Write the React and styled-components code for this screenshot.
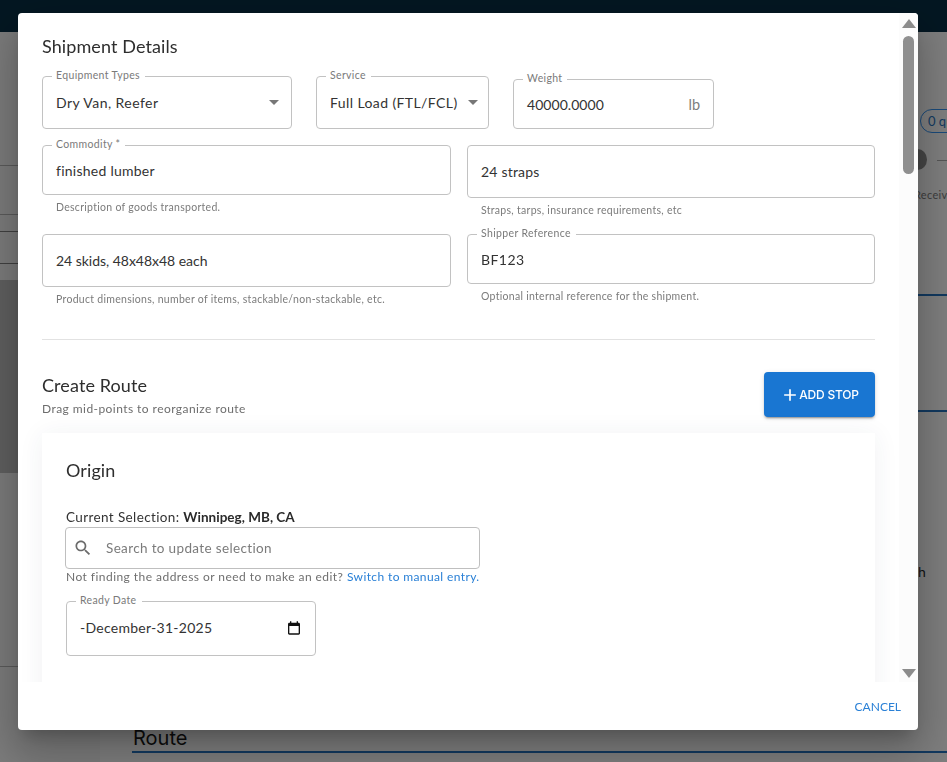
import React from "react";
import styled, { createGlobalStyle } from "styled-components";

const FONT = `"Lato", "Open Sans", "Liberation Sans", sans-serif`;

const Global = createGlobalStyle`
  html, body { margin: 0; padding: 0; height: 100%; overflow: hidden; background: #7c7c7c; }
  * { box-sizing: border-box; }
  body { font-family: ${FONT}; color: #2b2b2b; }
`;

const Page = styled.div`
  width: 947px;
  height: 762px;
  display: flex;
  flex-direction: column;
  overflow: hidden;
  background: #7e7e7e;
`;
const TopBar = styled.div`
  height: 32px;
  flex: none;
  background: #041722;
`;
const Body = styled.div`
  flex: 1;
  display: grid;
  grid-template-columns: 100px 847px;
  min-height: 0;
`;
const Sidebar = styled.div`
  display: flex;
  flex-direction: column;
  background: #7b7b7b;
`;
const SideRow = styled.div`
  height: ${(p) => p.$h}px;
  flex: none;
  background: ${(p) => p.$bg || "transparent"};
  border-bottom: ${(p) => (p.$line ? `1px solid ${p.$line}` : "none")};
`;
const Main = styled.div`
  display: flex;
  flex-direction: column;
  padding-left: 32px;
  overflow: hidden;
`;
const Chip = styled.div`
  margin: 77px 0 0 788px;
  flex: none;
  width: 80px;
  height: 24px;
  border: 1px solid #1a4a7a;
  border-radius: 12px;
  padding-left: 7px;
  font-size: 13px;
  line-height: 22px;
  color: #123a60;
  white-space: nowrap;
`;
const Stepper = styled.div`
  margin: 15px 0 0 776px;
  flex: none;
  display: flex;
  align-items: center;
  gap: 10px;
  height: 22px;
`;
const StepDot = styled.div`
  width: 19px;
  height: 21px;
  border-radius: 50%;
  background: #464646;
  flex: none;
`;
const StepLine = styled.div`
  width: 60px;
  height: 1px;
  background: #565656;
  flex: none;
  margin-top: 3px;
`;
const StepText = styled.div`
  margin: 18px 0 0 782px;
  font-size: 11px;
  line-height: 14px;
  letter-spacing: 0.3px;
  color: #3d3d3d;
  white-space: nowrap;
  flex: none;
`;
const BlueRule = styled.div`
  flex: none;
  height: 2px;
  margin-top: ${(p) => p.$mt}px;
  background: #12395f;
  width: 815px;
`;
const StrayText = styled.div`
  flex: none;
  margin: 151px 0 0 786px;
  font-size: 14px;
  line-height: 18px;
  color: #111;
`;
const RouteHeading = styled.div`
  flex: none;
  margin: 145px 0 0 1px;
  font-family: "Inter", sans-serif;
  font-size: 20px;
  line-height: 25px;
  color: #0c0c0c;
`;

const Modal = styled.div`
  position: fixed;
  left: 18px;
  top: 13px;
  width: 900px;
  height: 717px;
  background: #fff;
  border-radius: 4px;
  display: flex;
  flex-direction: column;
  overflow: hidden;
  box-shadow: 0 11px 15px -7px rgba(0,0,0,.2), 0 24px 38px 3px rgba(0,0,0,.14), 0 9px 46px 8px rgba(0,0,0,.12);
`;
const ScrollRegion = styled.div`
  height: 669px;
  flex: none;
  display: flex;
  overflow: hidden;
`;
const Content = styled.div`
  width: 881px;
  flex: none;
  padding: 20px 24px 0;
  display: flex;
  flex-direction: column;
`;
const ScrollRail = styled.div`
  width: 19px;
  flex: none;
  background: #fcfcfc;
  display: flex;
  flex-direction: column;
  align-items: center;
  padding-top: 6px;
`;
const ArrowUp = styled.div`
  flex: none;
  width: 0; height: 0;
  border-left: 7px solid transparent;
  border-right: 7px solid transparent;
  border-bottom: 9px solid #8c8c8c;
`;
const ArrowDown = styled.div`
  flex: none;
  margin-top: auto;
  margin-bottom: 4px;
  width: 0; height: 0;
  border-left: 7px solid transparent;
  border-right: 7px solid transparent;
  border-top: 9px solid #8c8c8c;
`;
const Thumb = styled.div`
  flex: none;
  margin-top: 8px;
  width: 11px;
  height: 138px;
  border-radius: 6px;
  background: #8f8f8f;
`;

const SectionTitle = styled.h2`
  margin: 0;
  font-size: 18px;
  line-height: 26px;
  font-weight: 400;
  color: #2e2e2e;
  letter-spacing: 0.1px;
`;
const TopFields = styled.div`
  margin-top: 17px;
  display: flex;
  align-items: flex-end;
  gap: 24px;
`;
const TextGrid = styled.div`
  margin-top: 16px;
  display: grid;
  grid-template-columns: 409px 408px;
  column-gap: 16px;
  row-gap: 17px;
  align-items: start;
`;
const Cell = styled.div`
  display: flex;
  flex-direction: column;
  min-width: 0;
  height: ${(p) => p.$h}px;
`;
const Box = styled.div`
  position: relative;
  flex: none;
  width: ${(p) => (p.$w ? `${p.$w}px` : "100%")};
  height: ${(p) => p.$h}px;
  border: 1px solid #c2c2c2;
  border-radius: 4px;
  padding: 0 ${(p) => p.$pr ?? 13}px 0 13px;
  display: flex;
  align-items: center;
  justify-content: space-between;
  background: #fff;
`;
const FloatLabel = styled.span`
  position: absolute;
  top: -9px;
  left: 9px;
  padding: 0 5px 0 4px;
  background: #fff;
  font-size: 10.5px;
  line-height: 14px;
  letter-spacing: 0.35px;
  color: #7a7a7a;
  white-space: nowrap;
`;
const Value = styled.span`
  font-size: 14px;
  letter-spacing: ${(p) => p.$ls ?? 0.45}px;
  color: #333;
  white-space: nowrap;
`;
const Unit = styled.span`
  font-size: 14.5px;
  color: #7d7d7d;
`;
const Caret = styled.span`
  flex: none;
  width: 0; height: 0;
  border-left: 5px solid transparent;
  border-right: 5px solid transparent;
  border-top: 5px solid #777;
`;
const Helper = styled.p`
  margin: 5px 0 0 14px;
  font-size: 10.5px;
  line-height: 14px;
  letter-spacing: 0.29px;
  color: #7b7b7b;
  white-space: nowrap;
`;
const Divider = styled.hr`
  margin: 33px 0 0;
  border: 0;
  border-top: 1px solid #e2e2e2;
`;
const RouteHeader = styled.div`
  margin-top: 32px;
  display: flex;
  justify-content: space-between;
  align-items: flex-start;
`;
const RouteText = styled.div`
  padding-top: 0;
`;
const Sub = styled.div`
  font-size: 12px;
  line-height: 16px;
  letter-spacing: 0.44px;
  color: #6d6d6d;
  margin-top: 3px;
`;
const AddButton = styled.button`
  width: 111px;
  height: 45px;
  border: 0;
  border-radius: 4px;
  background: #1976d2;
  color: #fff;
  display: flex;
  align-items: center;
  justify-content: center;
  font-family: "Inter", sans-serif;
  font-size: 12px;
  font-weight: 500;
  letter-spacing: -0.22px;
  box-shadow: 0 3px 1px -2px rgba(0,0,0,.2), 0 2px 2px rgba(0,0,0,.14), 0 1px 5px rgba(0,0,0,.12);
`;
const Card = styled.div`
  margin-top: 16px;
  flex: none;
  height: 320px;
  background: #fff;
  padding: 24px 24px;
  box-shadow: 0 2px 24px rgba(40,60,90,.07);
`;
const CardTitle = styled(SectionTitle)`
  margin-bottom: 25px;
`;
const Current = styled.div`
  font-size: 13.5px;
  line-height: 18px;
  letter-spacing: 0.38px;
  color: #333;
  b { font-weight: 700; color: #2a2a2a; letter-spacing: 0.02px; }
`;
const SearchBox = styled.div`
  margin: 1px 0 0 -1px;
  width: 415px;
  height: 42px;
  border: 1px solid #bfbfbf;
  border-radius: 4px;
  display: flex;
  align-items: center;
  padding-left: 7px;
  gap: 14px;
`;
const Placeholder = styled.span`
  font-size: 13.5px;
  letter-spacing: 0.35px;
  color: #7b7b7b;
`;
const Note = styled.div`
  margin-top: 0;
  font-size: 12px;
  line-height: 16px;
  letter-spacing: 0.45px;
  color: #6f6f6f;
  white-space: nowrap;
`;
const Link = styled.a`
  color: #2a80d6;
  letter-spacing: 0.38px;
`;
const DateField = styled(Box)`
  margin-top: 16px;
  padding-bottom: 2px;
`;
const Actions = styled.div`
  flex: 1;
  display: flex;
  align-items: center;
  justify-content: flex-end;
  padding: 1px 17px 0 0;
`;
const Cancel = styled.button`
  border: 0;
  background: none;
  padding: 0;
  font-family: ${FONT};
  font-size: 12px;
  letter-spacing: 0;
  color: #2a80d6;
`;
const Glyph = styled.svg`
  flex: none;
  margin-right: -1px;
`;

const Icon = ({ d, size, fill }) => (
  <Glyph width={size} height={size} viewBox="0 0 24 24" fill={fill}>
    <path d={d} />
  </Glyph>
);

export default function App() {
  return (
    <Page>
      <Global />
      <TopBar />
      <Body>
        <Sidebar>
          <SideRow $h={134} $line="#5a5a5a" />
          <SideRow $h={49} $line="#5a5a5a" />
          <SideRow $h={17} $line="#404040" />
          <SideRow $h={32} $line="#404040" />
          <SideRow $h={16} />
          <SideRow $h={193} $bg="#5f5f5f" />
          <SideRow $h={194} $line="#5a5a5a" />
        </Sidebar>
        <Main>
          <Chip>0 quotes</Chip>
          <Stepper>
            <StepDot />
            <StepLine />
          </Stepper>
          <StepText>Received</StepText>
          <BlueRule $mt={92} />
          <BlueRule $mt={114} />
          <StrayText>h</StrayText>
          <RouteHeading>Route</RouteHeading>
          <BlueRule $mt={0} />
        </Main>
      </Body>
      <Modal>
        <ScrollRegion>
          <Content>
            <SectionTitle>Shipment Details</SectionTitle>
            <TopFields>
              <Box $w={250} $h={53} $pr={12}>
                <FloatLabel>Equipment Types</FloatLabel>
                <Value>Dry Van, Reefer</Value>
                <Caret />
              </Box>
              <Box $w={173} $h={53} $pr={10}>
                <FloatLabel>Service</FloatLabel>
                <Value $ls={0.4}>Full Load (FTL/FCL)</Value>
                <Caret />
              </Box>
              <Box $w={201} $h={50}>
                <FloatLabel>Weight</FloatLabel>
                <Value $ls={0.05}>40000.0000</Value>
                <Unit>lb</Unit>
              </Box>
            </TopFields>
            <TextGrid>
              <Cell $h={72}>
                <Box $h={50}>
                  <FloatLabel>Commodity *</FloatLabel>
                  <Value $ls={0.25}>finished lumber</Value>
                </Box>
                <Helper>Description of goods transported.</Helper>
              </Cell>
              <Cell $h={72}>
                <Box $h={53}>
                  <Value $ls={0.2}>24 straps</Value>
                </Box>
                <Helper>Straps, tarps, insurance requirements, etc</Helper>
              </Cell>
              <Cell $h={72}>
                <Box $h={53}>
                  <Value $ls={-0.03}>24 skids, 48x48x48 each</Value>
                </Box>
                <Helper>Product dimensions, number of items, stackable/non-stackable, etc.</Helper>
              </Cell>
              <Cell $h={72}>
                <Box $h={50}>
                  <FloatLabel>Shipper Reference</FloatLabel>
                  <Value>BF123</Value>
                </Box>
                <Helper>Optional internal reference for the shipment.</Helper>
              </Cell>
            </TextGrid>
            <Divider />
            <RouteHeader>
              <RouteText>
                <SectionTitle>Create Route</SectionTitle>
                <Sub>Drag mid-points to reorganize route</Sub>
              </RouteText>
              <AddButton>
                <Icon size={20} fill="#fff" d="M19 13h-6v6h-2v-6H5v-2h6V5h2v6h6v2z" />
                ADD STOP
              </AddButton>
            </RouteHeader>
            <Card>
              <CardTitle>Origin</CardTitle>
              <Current>
                Current Selection: <b>Winnipeg, MB, CA</b>
              </Current>
              <SearchBox>
                <Icon
                  size={20}
                  fill="#6b6b6b"
                  d="M15.5 14h-.79l-.28-.27C15.41 12.59 16 11.11 16 9.5 16 5.91 13.09 3 9.5 3S3 5.91 3 9.5 5.91 16 9.5 16c1.61 0 3.09-.59 4.23-1.57l.27.28v.79l5 4.99L20.49 19l-4.99-5zm-6 0C7.01 14 5 11.99 5 9.5S7.01 5 9.5 5 14 7.01 14 9.5 11.99 14 9.5 14z"
                />
                <Placeholder>Search to update selection</Placeholder>
              </SearchBox>
              <Note>
                Not finding the address or need to make an edit? <Link>Switch to manual entry.</Link>
              </Note>
              <DateField $w={250} $h={55} $pr={14}>
                <FloatLabel>Ready Date</FloatLabel>
                <Value $ls={0.27}>-December-31-2025</Value>
                <Icon
                  size={16}
                  fill="#111"
                  d="M19 4h-1V2h-2v2H8V2H6v2H5c-1.1 0-2 .9-2 2v14c0 1.1.9 2 2 2h14c1.1 0 2-.9 2-2V6c0-1.1-.9-2-2-2zm0 16H5V9h14v11z"
                />
              </DateField>
            </Card>
          </Content>
          <ScrollRail>
            <ArrowUp />
            <Thumb />
            <ArrowDown />
          </ScrollRail>
        </ScrollRegion>
        <Actions>
          <Cancel>CANCEL</Cancel>
        </Actions>
      </Modal>
    </Page>
  );
}
